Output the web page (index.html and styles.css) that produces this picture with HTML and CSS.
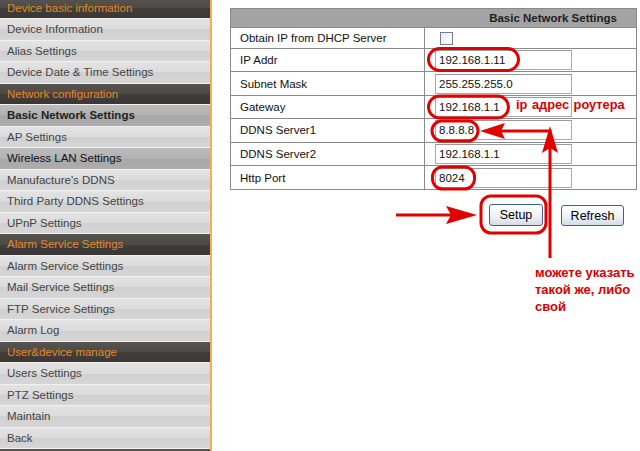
FILE: index.html
```html
<!DOCTYPE html>
<html>
<head>
<meta charset="utf-8">
<link rel="stylesheet" href="styles.css">
</head>
<body>
<div class="page">
  <nav class="side">
    <div class="grp">Device basic information</div>
    <div class="item">Device Information</div>
    <div class="item">Alias Settings</div>
    <div class="item">Device Date &amp; Time Settings</div>
    <div class="grp">Network configuration</div>
    <div class="item on bold">Basic Network Settings</div>
    <div class="item">AP Settings</div>
    <div class="item on">Wireless LAN Settings</div>
    <div class="item">Manufacture's DDNS</div>
    <div class="item">Third Party DDNS Settings</div>
    <div class="item">UPnP Settings</div>
    <div class="grp">Alarm Service Settings</div>
    <div class="item">Alarm Service Settings</div>
    <div class="item">Mail Service Settings</div>
    <div class="item">FTP Service Settings</div>
    <div class="item">Alarm Log</div>
    <div class="grp">User&amp;device manage</div>
    <div class="item">Users Settings</div>
    <div class="item">PTZ Settings</div>
    <div class="item">Maintain</div>
    <div class="item">Back</div>
    <div class="grp"></div>
  </nav>
  <main class="main">
    <div class="tbl">
      <div class="thead">Basic Network Settings</div>
      <div class="row first"><div class="lab">Obtain IP from DHCP Server</div><div class="val"><span class="chk"></span></div></div>
      <div class="row"><div class="lab">IP Addr</div><div class="val"><span class="inp">192.168.1.11</span></div></div>
      <div class="row"><div class="lab">Subnet Mask</div><div class="val"><span class="inp">255.255.255.0</span></div></div>
      <div class="row"><div class="lab">Gateway</div><div class="val"><span class="inp">192.168.1.1</span></div></div>
      <div class="row"><div class="lab">DDNS Server1</div><div class="val"><span class="inp">8.8.8.8</span></div></div>
      <div class="row"><div class="lab">DDNS Server2</div><div class="val"><span class="inp">192.168.1.1</span></div></div>
      <div class="row"><div class="lab">Http Port</div><div class="val"><span class="inp">8024</span></div></div>
    </div>
    <div class="btns">
      <button class="btn setup">Setup</button>
      <button class="btn refresh">Refresh</button>
    </div>
  </main>
</div>
<svg class="marks" width="640" height="451" viewBox="0 0 640 451">
  <g fill="none" stroke="#e00000" stroke-width="3">
    <rect x="428.5" y="48.5" width="90" height="22" rx="11"/>
    <rect x="428.5" y="96" width="80" height="22" rx="11"/>
    <rect x="432" y="121" width="46" height="20" rx="10"/>
    <rect x="432.5" y="167" width="42" height="22" rx="10"/>
    <rect x="481" y="196" width="65" height="37" rx="10"/>
    <line x1="396" y1="215" x2="452" y2="215"/>
    <polyline points="550,258 550,131 500,131"/>
  </g>
  <g fill="#e00000">
    <polygon points="477,215 446,206 451,215 446,224"/>
    <polygon points="480,131 505,123 501,131 505,139"/>
    <polygon points="550,126 558,153 550,148 542,153"/>
  </g>
</svg>
<div class="note note-ip">ip адрес роутера</div>
<div class="note note-dns">можете указать<br>такой же, либо<br>свой</div>
</body>
</html>
```
FILE: styles.css
```css
html, body {
  margin: 0;
  padding: 0;
  width: 640px;
  height: 451px;
  overflow: hidden;
  background: #ffffff;
  font-family: "Liberation Sans", Arial, sans-serif;
}
.page {
  display: flex;
  align-items: flex-start;
  height: 451px;
}
.side {
  width: 210px;
  border-right: 2px solid #f4ad55;
  margin-top: -3.5px;
  height: 460px;
  display: flex;
  flex-direction: column;
  flex: none;
}
.side > div {
  height: 21.5px;
  box-sizing: border-box;
  border-top: 1px solid #f1f1f1;
  padding-left: 7px;
  font-size: 11.5px;
  line-height: 20px;
  white-space: nowrap;
  flex: none;
}
.grp {
  background: linear-gradient(#57534f, #4d4946 50%, #413d3a 50%, #3b3734);
  color: #e08a2c;
}
.item {
  background: linear-gradient(#e3e3e3, #dbdbdb 50%, #d0d0d0 50%, #d6d6d6);
  color: #444;
}
.item.on {
  background: linear-gradient(#bbbbbb, #b2b2b2 50%, #a8a8a8 50%, #adadad);
  color: #111;
}
.item.bold {
  font-weight: bold;
  color: #222;
}
.main {
  padding: 8px 0 0 18px;
  flex: none;
}
.tbl {
  width: 407px;
  box-sizing: border-box;
  border: 1px solid #8a8a8a;
  border-top: 0;
  font-size: 11.5px;
  color: #111;
}
.thead {
  height: 20px;
  box-sizing: border-box;
  background: #a3a3a3;
  border-top: 1px solid #8a8a8a;
  border-bottom: 1px solid #8a8a8a;
  text-align: right;
  padding-right: 19px;
  font-weight: bold;
  color: #1e1e1e;
  line-height: 18px;
}
.row {
  display: grid;
  grid-template-columns: 194px 1fr;
  height: 23.4px;
  box-sizing: border-box;
  border-bottom: 1px solid #8a8a8a;
}
.row.first {
  height: 21px;
}
.row:last-child {
  border-bottom: 0;
}
.lab {
  border-right: 1px solid #8a8a8a;
  padding-left: 9px;
  display: flex;
  align-items: center;
  white-space: nowrap;
}
.val {
  padding-left: 10px;
  display: flex;
  align-items: center;
}
.inp {
  width: 137px;
  height: 20px;
  box-sizing: border-box;
  border: 1px solid #a9a9a9;
  border-top-color: #9a9a9a;
  padding-left: 3px;
  line-height: 18px;
  background: #fff;
  color: #111;
}
.chk {
  width: 13px;
  height: 13px;
  box-sizing: border-box;
  border: 1px solid #6f7f98;
  margin-left: 5px;
  background: linear-gradient(135deg, #e8ecf0, #ffffff);
}
.btns {
  display: flex;
  align-items: flex-start;
  gap: 18px;
  padding-left: 259px;
  margin-top: 14px;
}
.btn {
  height: 22px;
  box-sizing: border-box;
  border: 1px solid #3f5f94;
  border-radius: 3px;
  background: linear-gradient(#ffffff, #eef1f6 55%, #d5dce9);
  font-family: "Liberation Sans", Arial, sans-serif;
  font-size: 12.5px;
  color: #000;
  padding: 0;
  margin: 0;
}
.setup {
  width: 54px;
}
.refresh {
  width: 63px;
  height: 21px;
  margin-top: 1px;
}
.marks {
  position: absolute;
  left: 0;
  top: 0;
  pointer-events: none;
}
.note {
  position: absolute;
  color: #d60000;
  font-weight: bold;
  font-family: "Liberation Sans", Arial, sans-serif;
  white-space: nowrap;
}
.note-ip {
  left: 516px;
  top: 97px;
  font-size: 12.8px;
  word-spacing: 1px;
}
.note-dns {
  left: 535px;
  top: 264px;
  font-size: 13px;
  line-height: 17px;
}
```
